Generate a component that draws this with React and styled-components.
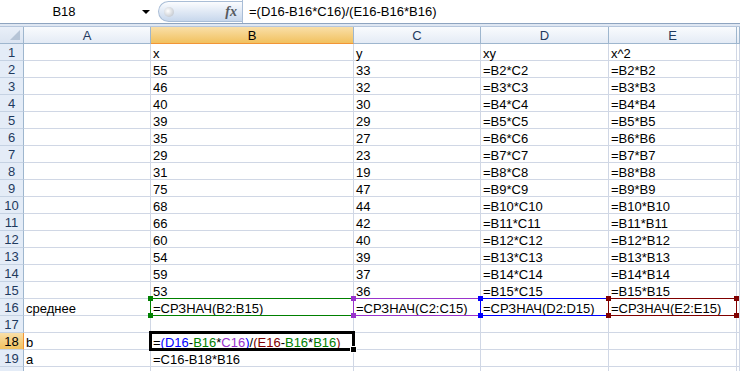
import React from 'react';
import styled, { createGlobalStyle, css } from 'styled-components';

const GlobalStyle = createGlobalStyle`
  html, body { margin: 0; padding: 0; background: #fff; }
  body { font-family: "Liberation Sans", Arial, sans-serif; font-size: 13px; color: #000; }
`;

const Page = styled.div`
  width: 740px;
  height: 371px;
  overflow: hidden;
  display: flex;
  flex-direction: column;
  & > * { flex-shrink: 0; }
`;

const FormulaBar = styled.div`
  height: 23px;
  display: flex;
  align-items: stretch;
  background: #fff;
  border-bottom: 1px solid #8ea4c0;
`;

const NameBox = styled.div`
  width: 155px;
  display: flex;
  align-items: center;
  span { flex: 1; text-align: center; padding-right: 14px; }
`;

const Arrow = styled.div`
  width: 0; height: 0;
  border-left: 4px solid transparent;
  border-right: 4px solid transparent;
  border-top: 4px solid #000;
  margin-right: 5px;
`;

const Pill = styled.div`
  width: 84px;
  margin: 1px 0 1px 3px;
  border-radius: 11px 0 0 11px;
  background: linear-gradient(#fbfcfe, #e3ebf6 45%, #c7d7ec);
  border: 1px solid #a9bdd6;
  border-right: none;
  display: flex;
  align-items: center;
  justify-content: space-between;
  padding: 0 5px 0 5px;
  box-sizing: border-box;
`;

const Knob = styled.div`
  width: 10px; height: 10px; border-radius: 50%;
  background: radial-gradient(circle at 40% 40%, #fff, #b3b9c2);
`;

const Fx = styled.div`
  font-family: "Liberation Serif", "Times New Roman", serif;
  font-style: italic;
  font-weight: bold;
  font-size: 14px;
  color: #55595f;
`;

const FormulaText = styled.div`
  flex: 1;
  border-left: 1px solid #a9bdd6;
  display: flex;
  align-items: center;
  padding-left: 6px;
`;

const Spacer = styled.div`
  height: 2px;
  background: #dfe7f2;
  border-bottom: 1px solid #b6c6dc;
`;

const Grid = styled.div`
  display: grid;
  grid-template-columns: 24px 127px 203px 127px 128px 128px 1fr;
  grid-template-rows: 17px;
  grid-auto-rows: 17px;
`;

const ColHead = styled.div`
  box-sizing: border-box;
  border-right: 1px solid #9eb6ce;
  border-bottom: 1px solid #9eb6ce;
  display: flex;
  align-items: center;
  justify-content: center;
  color: #1f3a5e;
  background: linear-gradient(#f9fbfd, #e4ebf5);
  ${p => p.$active && css`
    background: linear-gradient(#f9dfa8, #f1c15f);
    border-bottom: 1px solid #f29536;
    color: #000;
  `}
`;

const Corner = styled(ColHead)`
  position: relative;
  background: linear-gradient(#e9eff8, #dbe4f1);
  &::after {
    content: "";
    position: absolute;
    right: 3px; bottom: 3px;
    width: 0; height: 0;
    border-left: 10px solid transparent;
    border-bottom: 10px solid #b6c4d6;
  }
`;

const RowHead = styled.div`
  box-sizing: border-box;
  border-right: 1px solid #9eb6ce;
  border-bottom: 1px solid #c5d2e3;
  background: #e4ecf7;
  display: flex;
  align-items: center;
  justify-content: center;
  padding-top: 1px;
  color: #1f3a5e;
  ${p => p.$active && css`
    background: linear-gradient(#f9dfa8, #f1c15f);
    border-right: 1px solid #f29536;
    color: #000;
  `}
`;

const Cell = styled.div`
  box-sizing: border-box;
  border-right: 1px solid #d0d7e5;
  border-bottom: 1px solid #d0d7e5;
  padding: 2px 0 0 2px;
  line-height: 15px;
  white-space: nowrap;
  position: relative;
  z-index: ${p => (p.$range || p.$active ? 2 : 1)};
`;

const RangeBox = styled.div`
  position: absolute;
  left: -1px; top: -1px; right: -1px; bottom: -1px;
  border: 1px solid ${p => p.$color};
  pointer-events: none;
  span {
    position: absolute;
    width: 5px; height: 5px;
    background: ${p => p.$color};
  }
  span:nth-child(1) { left: -3px; top: -3px; }
  span:nth-child(2) { right: -3px; top: -3px; }
  span:nth-child(3) { left: -3px; bottom: -3px; }
  span:nth-child(4) { right: -3px; bottom: -3px; }
`;

const ActiveBox = styled.div`
  position: absolute;
  left: -2px; top: -2px; right: -2px; bottom: -2px;
  border: 3px solid #000;
  pointer-events: none;
  &::after {
    content: "";
    position: absolute;
    right: -5px; bottom: -5px;
    width: 5px; height: 5px;
    background: #000;
    border: 1px solid #fff;
  }
`;

const Ref = styled.span`
  color: ${p => p.$c};
`;

const cols = ['A', 'B', 'C', 'D', 'E', ''];

const data = [
  ['', 'x', 'y', 'xy', 'x^2'],
  ['', '55', '33', '=B2*C2', '=B2*B2'],
  ['', '46', '32', '=B3*C3', '=B3*B3'],
  ['', '40', '30', '=B4*C4', '=B4*B4'],
  ['', '39', '29', '=B5*C5', '=B5*B5'],
  ['', '35', '27', '=B6*C6', '=B6*B6'],
  ['', '29', '23', '=B7*C7', '=B7*B7'],
  ['', '31', '19', '=B8*C8', '=B8*B8'],
  ['', '75', '47', '=B9*C9', '=B9*B9'],
  ['', '68', '44', '=B10*C10', '=B10*B10'],
  ['', '66', '42', '=B11*C11', '=B11*B11'],
  ['', '60', '40', '=B12*C12', '=B12*B12'],
  ['', '54', '39', '=B13*C13', '=B13*B13'],
  ['', '59', '37', '=B14*C14', '=B14*B14'],
  ['', '53', '36', '=B15*C15', '=B15*B15'],
  ['среднее', '=СРЗНАЧ(B2:B15)', '=СРЗНАЧ(C2:C15)', '=СРЗНАЧ(D2:D15)', '=СРЗНАЧ(E2:E15)'],
  ['', '', '', '', ''],
  ['b', 'FORMULA', '', '', ''],
  ['a', '=C16-B18*B16', '', '', ''],
  ['', '', '', '', ''],
];

const GREEN = '#008000';
const PURPLE = '#9933cc';
const BLUE = '#0000ff';
const RED = '#800000';

const rangeColors = { 1: GREEN, 2: PURPLE, 3: BLUE, 4: RED };

const ColoredFormula = () => (
  <>
    =<Ref $c={BLUE}>(D16</Ref>-<Ref $c={GREEN}>B16</Ref>*<Ref $c={PURPLE}>C16</Ref><Ref $c={BLUE}>)</Ref>/<Ref $c={RED}>(E16</Ref>-<Ref $c={GREEN}>B16</Ref>*<Ref $c={GREEN}>B16</Ref><Ref $c={RED}>)</Ref>
  </>
);

const App = () => {
  return (
    <Page>
      <GlobalStyle />
      <FormulaBar>
        <NameBox>
          <span>B18</span>
          <Arrow />
        </NameBox>
        <Pill>
          <Knob />
          <Fx>fx</Fx>
        </Pill>
        <FormulaText>=(D16-B16*C16)/(E16-B16*B16)</FormulaText>
      </FormulaBar>
      <Spacer />
      <Grid>
        <Corner />
        {cols.map((c, i) => (
          <ColHead key={i} $active={c === 'B'}>{c}</ColHead>
        ))}
        {data.map((row, r) => {
          const n = r + 1;
          return (
            <React.Fragment key={r}>
              <RowHead $active={n === 18}>{n < 20 ? n : ''}</RowHead>
              {row.map((v, c) => {
                const isRange = n === 16 && c > 0;
                const isActive = n === 18 && c === 1;
                return (
                  <Cell key={c} $range={isRange} $active={isActive}>
                    {v === 'FORMULA' ? <ColoredFormula /> : v}
                    {isRange && (
                      <RangeBox $color={rangeColors[c]}>
                        <span /><span /><span /><span />
                      </RangeBox>
                    )}
                    {isActive && <ActiveBox />}
                  </Cell>
                );
              })}
              <Cell />
            </React.Fragment>
          );
        })}
      </Grid>
    </Page>
  );
};

export default App;
